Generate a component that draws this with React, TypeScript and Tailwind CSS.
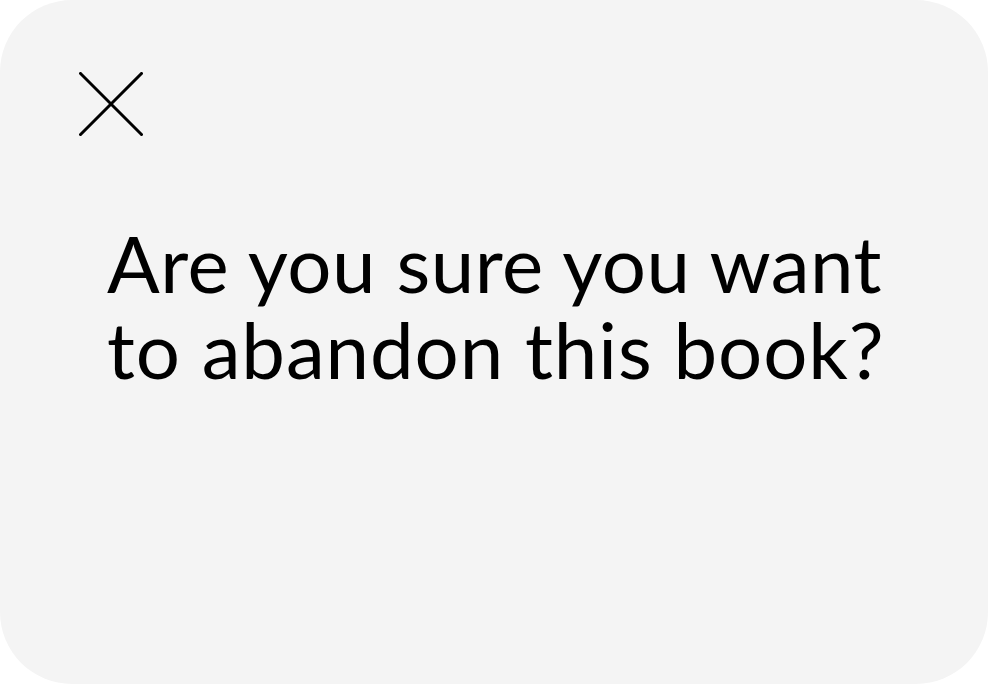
import React from "react";

export default function App() {
  return (
    <div className="w-[988px] h-[684px] bg-white">
      <div className="w-[988px] h-[684px] bg-[#f4f4f4] rounded-[72px] flex flex-col pt-[72px] pl-[79px]">
        <svg width="64" height="64" viewBox="0 0 64 64" className="block">
          <path d="M1.5 1.5 L62.5 62.5 M62.5 1.5 L1.5 62.5" stroke="#000" strokeWidth="3" strokeLinecap="square" fill="none" />
        </svg>
        <p
          className="ml-[28px] mt-[84px] text-black text-[78px] leading-[86px] tracking-[0.5px]"
          style={{ fontFamily: "Lato, 'Open Sans', sans-serif" }}
        >
          Are you sure you want
          <br />
          <span className="tracking-[0.9px]">to abandon this book?</span>
        </p>
      </div>
    </div>
  );
}
